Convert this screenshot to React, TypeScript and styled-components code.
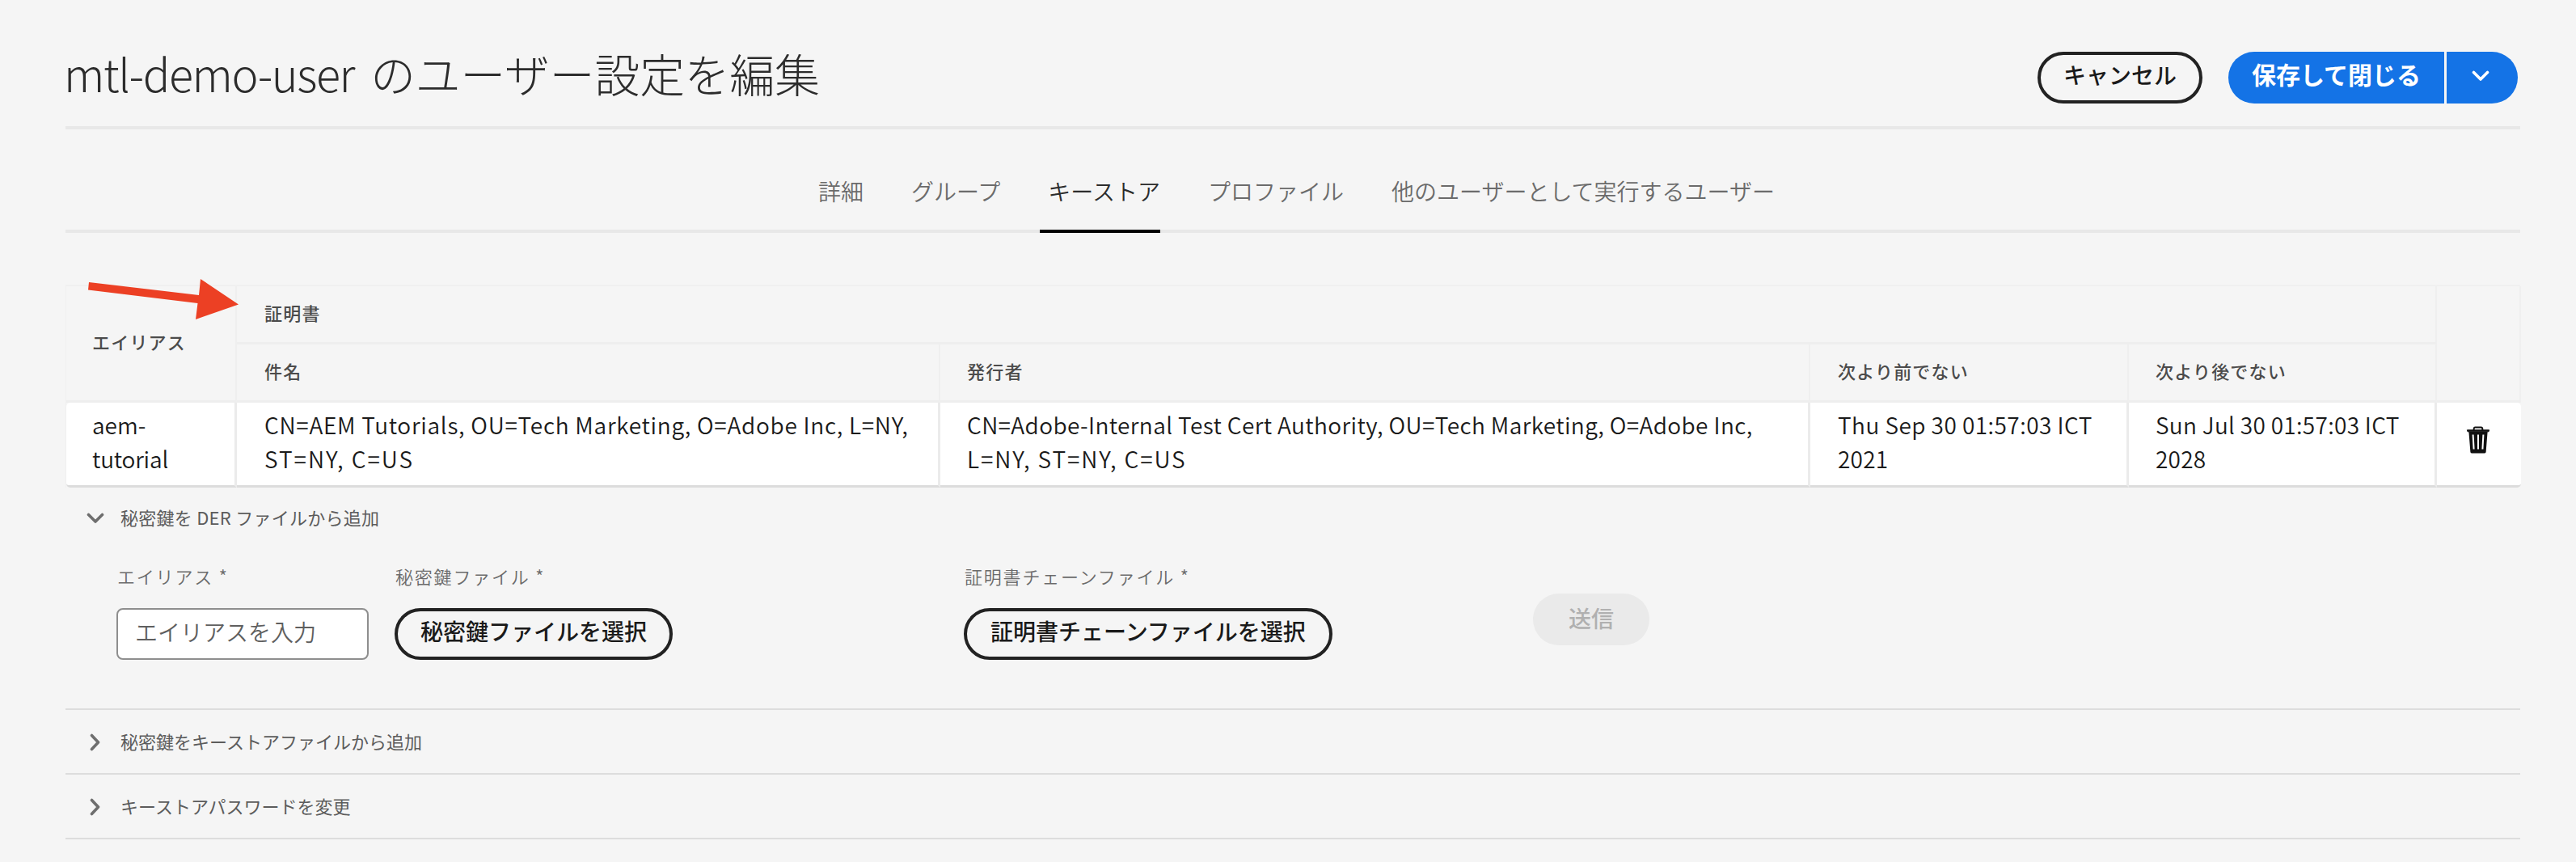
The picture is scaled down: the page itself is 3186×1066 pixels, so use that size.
import React from "react";
import styled, { createGlobalStyle } from "styled-components";

const GlobalStyle = createGlobalStyle`
  * { box-sizing: border-box; }
  body {
    margin: 0;
    background: #f5f5f5;
    font-family: "Noto Sans CJK JP", "Noto Sans", sans-serif;
  }
  button, input { font-family: inherit; }
`;

const Page = styled.main`
  position: relative;
  width: 3186px;
  height: 1066px;
  padding: 0 69px 0 81px;
  background: #f5f5f5;
  color: #1a1a1a;
  overflow: hidden;
`;

const Header = styled.header`
  display: flex;
  align-items: flex-start;
  justify-content: space-between;
  height: 160px;
  padding: 64px 3px 0 0;
  border-bottom: 4px solid #e8e8e8;
`;

const Title = styled.h1`
  display: flex;
  gap: 20px;
  margin: 0 0 0 -2px;
  font-size: 55.7px;
  font-weight: 300;
  line-height: 51px;
  white-space: nowrap;
  color: #2c2c2c;
`;

const UserName = styled.span`
  letter-spacing: -1.4px;
`;

const Actions = styled.div`
  display: flex;
  gap: 32px;
`;

const OutlineButton = styled.button<{ $width: number }>`
  width: ${(p) => p.$width}px;
  height: 64px;
  padding: 0 0 7px;
  border: 4px solid #222;
  border-radius: 32px;
  background: #f5f5f5;
  color: #1a1a1a;
  font-size: 28px;
  font-weight: 500;
  line-height: 49px;
  white-space: nowrap;
`;

const SplitButton = styled.div`
  display: flex;
  gap: 3px;
`;

const SaveButton = styled.button`
  width: 267px;
  height: 64px;
  padding: 0 0 9px;
  border: 0;
  border-radius: 32px 0 0 32px;
  background: #1473e6;
  color: #fff;
  font-size: 30px;
  font-weight: 700;
  line-height: 55px;
  white-space: nowrap;
`;

const MenuButton = styled.button`
  display: flex;
  align-items: center;
  justify-content: center;
  width: 88px;
  height: 64px;
  padding: 0 4px 4px 0;
  border: 0;
  border-radius: 0 32px 32px 0;
  background: #1473e6;
`;

const Tabs = styled.nav`
  display: flex;
  height: 128px;
  padding: 52px 0 0 931px;
  gap: 59px;
  border-bottom: 4px solid #e8e8e8;
`;

const Tab = styled.a<{ $active?: boolean }>`
  height: 76px;
  padding-left: ${(p) => (p.$active ? 10 : 0)}px;
  margin-left: ${(p) => (p.$active ? -10 : 0)}px;
  border-bottom: ${(p) => (p.$active ? "4px solid #000" : "0")};
  color: ${(p) => (p.$active ? "#2c2c2c" : "#6b6b6b")};
  font-size: 28px;
  font-weight: 350;
  line-height: 48px;
  white-space: nowrap;
`;

const Table = styled.section`
  display: grid;
  grid-template-columns: 211px 870px 1076px 394px 381px 104px;
  grid-template-rows: 72px 72px 105px;
  margin-top: 64px;
  border-top: 2px solid #f0f0f0;
  border-left: 1px solid #f0f0f0;
`;

const HeadCell = styled.div<{ $rows?: number; $cols?: number; $pad?: number }>`
  grid-row: span ${(p) => p.$rows ?? 1};
  grid-column: span ${(p) => p.$cols ?? 1};
  display: flex;
  align-items: center;
  padding: 0 0 5px ${(p) => p.$pad ?? 34}px;
  border-right: 2px solid #efefef;
  border-bottom: 3px solid #eeeeee;
  color: #4b4b4b;
  font-size: 22px;
  font-weight: 500;
  letter-spacing: 1.2px;
  line-height: 32px;
  white-space: nowrap;
`;

const Cell = styled.div<{ $edge?: "left" | "right"; $pad?: number }>`
  padding: 6px 0 0 ${(p) => p.$pad ?? 34}px;
  background: #fff;
  border-right: ${(p) => (p.$edge === "right" ? "0" : "3px solid #ebebeb")};
  border-bottom: 3px solid #dcdcdc;
  border-radius: ${(p) =>
    p.$edge === "left" ? "5px 0 0 5px" : p.$edge === "right" ? "0 5px 5px 0" : "0"};
  font-size: 28px;
  font-weight: 350;
  line-height: 42px;
`;

const Line = styled.span<{ $spacing?: number }>`
  display: block;
  letter-spacing: ${(p) => p.$spacing ?? 0}px;
  white-space: nowrap;
`;

const IconCell = styled(Cell)`
  display: flex;
  align-items: center;
  justify-content: center;
  padding: 0 2px 11px 0;
`;

const Section = styled.section<{ $height: number }>`
  height: ${(p) => p.$height}px;
  border-bottom: 2px solid #dddddd;
`;

const SectionHeader = styled.div<{ $top: number }>`
  display: flex;
  align-items: center;
  padding: ${(p) => p.$top}px 0 0 26px;
  height: ${(p) => p.$top + 32}px;
`;

const ChevronSlot = styled.span`
  display: flex;
  width: 42px;
  padding-top: 4px;
`;

const SectionTitle = styled.span<{ $spacing?: number }>`
  color: #5c5c5c;
  font-size: 22px;
  font-weight: 400;
  line-height: 32px;
  letter-spacing: ${(p) => p.$spacing ?? 0}px;
  white-space: nowrap;
`;

const Form = styled.form`
  display: flex;
  align-items: flex-start;
  padding: 41px 0 0 63px;
`;

const Field = styled.div<{ $width: number }>`
  display: flex;
  flex-direction: column;
  width: ${(p) => p.$width}px;
`;

const Label = styled.label`
  height: 56px;
  padding-left: 1px;
  color: #6b6b6b;
  font-size: 22px;
  font-weight: 350;
  letter-spacing: 1.8px;
  line-height: 32px;
  white-space: nowrap;
`;

const Input = styled.input`
  width: 312px;
  height: 64px;
  padding: 0 21px 6px;
  border: 2px solid #8e8e8e;
  border-radius: 8px;
  background: #fff;
  font-size: 28px;
  font-weight: 350;
  &::placeholder { color: #5f5f5f; opacity: 1; }
`;

const SubmitButton = styled.button`
  width: 144px;
  height: 64px;
  margin-top: 38px;
  padding: 0 0 5px;
  border: 0;
  border-radius: 32px;
  background: #eaeaea;
  color: #b0b0b0;
  font-size: 28px;
  font-weight: 500;
  line-height: 58px;
`;

const Arrow = styled.svg`
  position: absolute;
  left: 100px;
  top: 340px;
`;

function Chevron({ dir, color }: { dir: "down" | "right"; color: string }) {
  return (
    <svg width={22} height={22} viewBox="0 0 22 22" fill="none">
      <path
        d={dir === "down" ? "M2.5 6.5 11 15 19.5 6.5" : "M6.5 2.5 14.5 11 6.5 19.5"}
        stroke={color}
        strokeWidth="3.6"
        strokeLinecap="round"
        strokeLinejoin="round"
      />
    </svg>
  );
}

function TrashIcon() {
  return (
    <svg width="30" height="34" viewBox="0 0 30 34" fill="none">
      <path d="M9.5 5.5 9.8 2.6Q10 1.4 11.2 1.4H18.8Q20 1.4 20.2 2.6L20.5 5.5" stroke="#111" strokeWidth="2" />
      <path d="M1.4 4.8H28.6L28 6.8H2Z" fill="#111" stroke="#111" strokeLinejoin="round" />
      <path d="M3.4 7H26.6L24.6 32Q24.5 33.4 23 33.4H7Q5.5 33.4 5.4 32Z" fill="#111" />
      <path d="M8.6 10.5 9.6 28.5M15 10.5V28.5M21.4 10.5 20.4 28.5" stroke="#fff" strokeWidth="2" />
    </svg>
  );
}

const tabs = [
  { label: "詳細" },
  { label: "グループ" },
  { label: "キーストア", active: true },
  { label: "プロファイル" },
  { label: "他のユーザーとして実行するユーザー" },
];

export default function App() {
  return (
    <>
      <GlobalStyle />
      <Page lang="ja">
        <Header>
          <Title>
            <UserName>mtl-demo-user</UserName>
            <span>のユーザー設定を編集</span>
          </Title>
          <Actions>
            <OutlineButton $width={204}>キャンセル</OutlineButton>
            <SplitButton>
              <SaveButton>保存して閉じる</SaveButton>
              <MenuButton aria-label="メニュー">
                <Chevron dir="down" color="#fff" />
              </MenuButton>
            </SplitButton>
          </Actions>
        </Header>
        <Tabs>
          {tabs.map((t) => (
            <Tab key={t.label} $active={t.active}>
              {t.label}
            </Tab>
          ))}
        </Tabs>

        <Table>
          <HeadCell $rows={2} $pad={32}>エイリアス</HeadCell>
          <HeadCell $cols={4}>証明書</HeadCell>
          <HeadCell $rows={2} />
          <HeadCell>件名</HeadCell>
          <HeadCell $pad={33}>発行者</HeadCell>
          <HeadCell>次より前でない</HeadCell>
          <HeadCell $pad={33}>次より後でない</HeadCell>
          <Cell $edge="left" $pad={32}>
            <Line>aem-</Line>
            <Line $spacing={-0.2}>tutorial</Line>
          </Cell>
          <Cell>
            <Line $spacing={0.72}>CN=AEM Tutorials, OU=Tech Marketing, O=Adobe Inc, L=NY,</Line>
            <Line $spacing={2}>ST=NY, C=US</Line>
          </Cell>
          <Cell $pad={33}>
            <Line $spacing={0.38}>CN=Adobe-Internal Test Cert Authority, OU=Tech Marketing, O=Adobe Inc,</Line>
            <Line $spacing={1.9}>L=NY, ST=NY, C=US</Line>
          </Cell>
          <Cell>
            <Line $spacing={0.45}>Thu Sep 30 01:57:03 ICT</Line>
            <Line $spacing={0.2}>2021</Line>
          </Cell>
          <Cell $pad={33}>
            <Line $spacing={0.3}>Sun Jul 30 01:57:03 ICT</Line>
            <Line $spacing={0.2}>2028</Line>
          </Cell>
          <IconCell $edge="right">
            <TrashIcon />
          </IconCell>
        </Table>

        <Section $height={275}>
          <SectionHeader $top={20}>
            <ChevronSlot>
              <Chevron dir="down" color="#6e6e6e" />
            </ChevronSlot>
            <SectionTitle $spacing={0.25}>秘密鍵を DER ファイルから追加</SectionTitle>
          </SectionHeader>
          <Form>
            <Field $width={344}>
              <Label>エイリアス *</Label>
              <Input placeholder="エイリアスを入力" />
            </Field>
            <Field $width={704}>
              <Label>秘密鍵ファイル *</Label>
              <OutlineButton type="button" $width={344}>秘密鍵ファイルを選択</OutlineButton>
            </Field>
            <Field $width={704}>
              <Label>証明書チェーンファイル *</Label>
              <OutlineButton type="button" $width={456}>証明書チェーンファイルを選択</OutlineButton>
            </Field>
            <SubmitButton type="button">送信</SubmitButton>
          </Form>
        </Section>
        <Section $height={80}>
          <SectionHeader $top={22}>
            <ChevronSlot>
              <Chevron dir="right" color="#6e6e6e" />
            </ChevronSlot>
            <SectionTitle>秘密鍵をキーストアファイルから追加</SectionTitle>
          </SectionHeader>
        </Section>
        <Section $height={80}>
          <SectionHeader $top={22}>
            <ChevronSlot>
              <Chevron dir="right" color="#6e6e6e" />
            </ChevronSlot>
            <SectionTitle>キーストアパスワードを変更</SectionTitle>
          </SectionHeader>
        </Section>

        <Arrow width="200" height="60" viewBox="0 0 200 60">
          <path d="M10 9 146 25 148 5 195 36.5 142 55 144.5 35 9 18.5Z" fill="#ec4024" />
        </Arrow>
      </Page>
    </>
  );
}
